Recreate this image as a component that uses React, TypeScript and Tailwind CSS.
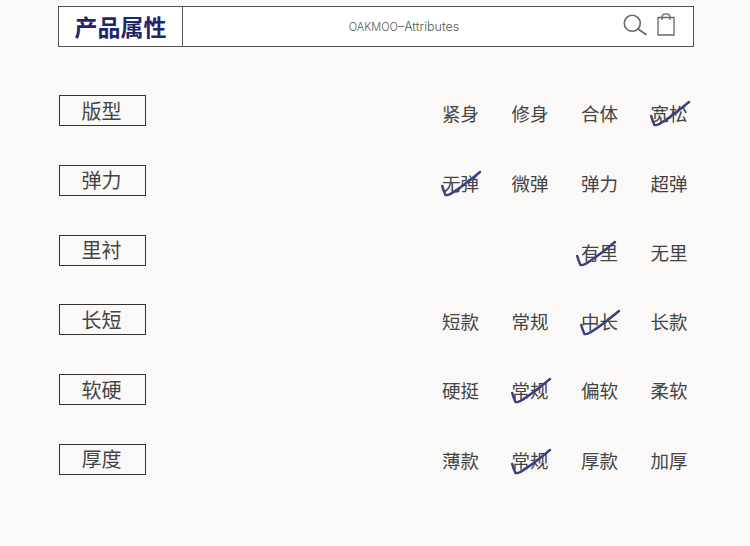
const rows = [
  { label: '版型', options: ['紧身', '修身', '合体', '宽松'], checked: 3, optionsClass: 'mt-[4px]', checkClass: 'left-[-2px] top-[1px]' },
  { label: '弹力', options: ['无弹', '微弹', '弹力', '超弹'], checked: 0, optionsClass: 'mt-[4px]', checkClass: 'left-[-2px] top-[1.5px]' },
  { label: '里衬', options: ['', '', '有里', '无里'], checked: 2, optionsClass: 'mt-[3px]', checkClass: 'left-[-6px] top-[2px]' },
  { label: '长短', options: ['短款', '常规', '中长', '长款'], checked: 2, optionsClass: 'mt-[3px]', checkClass: 'left-[-2px] top-[2px]' },
  { label: '软硬', options: ['硬挺', '常规', '偏软', '柔软'], checked: 1, optionsClass: 'mt-[2px]', checkClass: 'left-[-2px] top-[1px]' },
  { label: '厚度', options: ['薄款', '常规', '厚款', '加厚'], checked: 1, optionsClass: 'mt-[2px]', checkClass: 'left-[-2px] top-[2px]' },
]

function Check({ className }: { className: string }) {
  return (
    <svg
      className={`pointer-events-none absolute ${className}`}
      width="42"
      height="28"
      viewBox="0 0 42 28"
      fill="none"
    >
      <path
        d="M2.2 16 C3 19 4 22 5.5 25 C7 25.5 8.5 24.8 10.5 23.8 C20 18.5 30 10 40 2"
        stroke="#3b4080"
        strokeWidth="2.5"
        strokeLinecap="round"
        strokeLinejoin="round"
      />
    </svg>
  )
}

export default function App() {
  return (
    <div className="h-[546px] w-[750px] overflow-hidden bg-[#faf9f7] pl-[58px] pr-[56px] pt-[6px] font-['Noto_Sans_CJK_SC','Noto_Sans',sans-serif]">
      <div className="flex h-[41px] border border-[#555] bg-white">
        <div className="flex w-[124px] items-center justify-center border-r border-[#555] text-[23px] font-bold text-[#1f2768]">
          产品属性
        </div>
        <div className="relative flex flex-1 items-center justify-center pr-[68px] pt-px font-['Inter',sans-serif] font-light text-[#555]">
          <span className="text-[11px]">OAKMOO</span>
          <span className="text-[12.5px]">–Attributes</span>
          <div className="absolute right-[18px] top-[6px] flex items-start gap-[10px]">
            <svg width="25" height="24" viewBox="0 0 25 24" fill="none" stroke="#666" strokeWidth="1.6">
              <circle cx="10.3" cy="10.3" r="8" />
              <path d="M16 16 L24 21.5" strokeLinecap="round" />
            </svg>
            <svg width="18" height="24" viewBox="0 0 18 24" fill="none" stroke="#666" strokeWidth="1.3">
              <path d="M1 4.5 H17 V22 H1 Z" />
              <path d="M5 7 V4 C5 1.5 7 0.8 9 0.8 C11 0.8 13 1.5 13 4 V7" />
            </svg>
          </div>
        </div>
      </div>
      <div className="mt-[48px] grid auto-rows-[69.8px] pl-px">
        {rows.map((row) => (
          <div key={row.label} className="flex items-start justify-between">
            <div className="flex h-[31px] w-[87px] items-center justify-center border border-[#333] pr-[2px] text-[20px] leading-none text-[#444]">
              {row.label}
            </div>
            <div className={`mr-[6.5px] flex gap-[32.5px] ${row.optionsClass}`}>
              {row.options.map((option, i) => (
                <div key={i} className="relative h-[28px] w-[37px] text-[18.5px] leading-[28px] text-[#444]">
                  {option}
                  {i === row.checked && <Check className={row.checkClass} />}
                </div>
              ))}
            </div>
          </div>
        ))}
      </div>
    </div>
  )
}
